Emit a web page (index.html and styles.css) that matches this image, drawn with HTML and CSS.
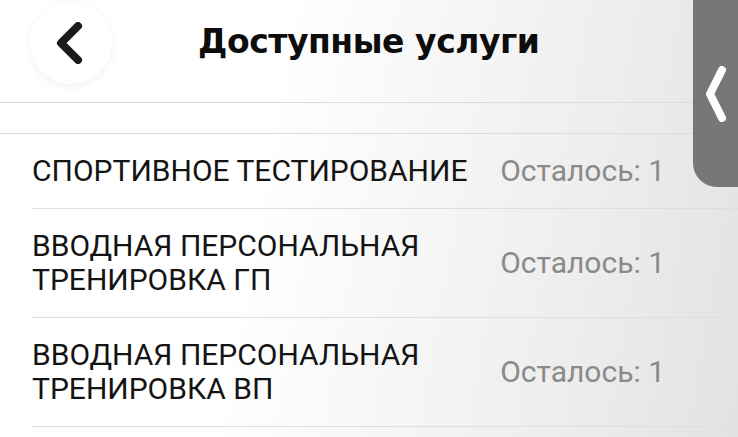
FILE: index.html
```html
<!DOCTYPE html>
<html lang="ru">
<head>
    <meta charset="UTF-8">
    <meta name="viewport" content="width=device-width, initial-scale=1.0">
    <title>Доступные услуги</title>
    <link rel="stylesheet" href="styles.css">
</head>
<body>
    <div class="screen">
        <header class="topbar">
            <button class="back" aria-label="Назад">
                <svg width="28" height="42" viewBox="0 0 28 42">
                    <path d="M23 4 L6 21 L23 38" fill="none" stroke="#1a1a1a" stroke-width="8" stroke-linecap="round" stroke-linejoin="round"/>
                </svg>
            </button>
            <h1>Доступные услуги</h1>
        </header>

        <div class="spacer"></div>

        <ul class="services">
            <li class="service">
                <span class="name">СПОРТИВНОЕ ТЕСТИРОВАНИЕ</span>
                <span class="left">Осталось: 1</span>
            </li>
            <li class="service">
                <span class="name">ВВОДНАЯ ПЕРСОНАЛЬНАЯ<br>ТРЕНИРОВКА ГП</span>
                <span class="left">Осталось: 1</span>
            </li>
            <li class="service">
                <span class="name">ВВОДНАЯ ПЕРСОНАЛЬНАЯ<br>ТРЕНИРОВКА ВП</span>
                <span class="left">Осталось: 1</span>
            </li>
        </ul>

        <div class="side-tab">
            <svg width="22" height="56" viewBox="0 0 22 56">
                <path d="M17 4 L5 28 L17 52" fill="none" stroke="#fff" stroke-width="8" stroke-linecap="round" stroke-linejoin="round"/>
            </svg>
        </div>
    </div>
</body>
</html>
```

FILE: styles.css
```css
body {
    margin: 0;
    font-family: Roboto, "Liberation Sans", sans-serif;
    background: #fff;
}
.screen {
    position: relative;
    width: 738px;
    height: 437px;
    overflow: hidden;
    background: linear-gradient(100deg, #ffffff 35%, #ececec 80%, #e2e2e2 100%);
}
.topbar {
    display: flex;
    align-items: center;
    height: 102px;
    padding-left: 30px;
    border-bottom: 1px solid #dcdcdc;
}
.back {
    width: 82px;
    height: 82px;
    margin-top: -16px;
    border: none;
    border-radius: 50%;
    background: #fff;
    box-shadow: 0 2px 10px rgba(0, 0, 0, 0.06);
    display: flex;
    align-items: center;
    justify-content: center;
    padding: 0 4px 0 0;
}
.topbar h1 {
    margin: -20px 0 0 86px;
    font-family: "DejaVu Sans", "Liberation Sans", sans-serif;
    font-weight: bold;
    font-size: 33px;
    letter-spacing: -0.45px;
    color: #0d0d0d;
}
.spacer {
    height: 30px;
    border-bottom: 1px solid #dcdcdc;
}
.services {
    list-style: none;
    margin: 0;
    padding: 0 0 0 32px;
}
.service {
    display: flex;
    align-items: center;
    justify-content: space-between;
    padding: 20px 73px 20px 0;
    border-bottom: 1px solid #dedede;
    font-size: 30px;
    line-height: 34px;
}
.name {
    color: #141414;
}
.left {
    color: #8a8a8a;
}
.side-tab {
    position: absolute;
    top: -24px;
    right: 0;
    width: 45px;
    height: 211px;
    border-radius: 24px 0 0 24px;
    background: #777;
    display: flex;
    align-items: center;
    justify-content: center;
    padding-top: 24px;
    box-sizing: border-box;
}
```
